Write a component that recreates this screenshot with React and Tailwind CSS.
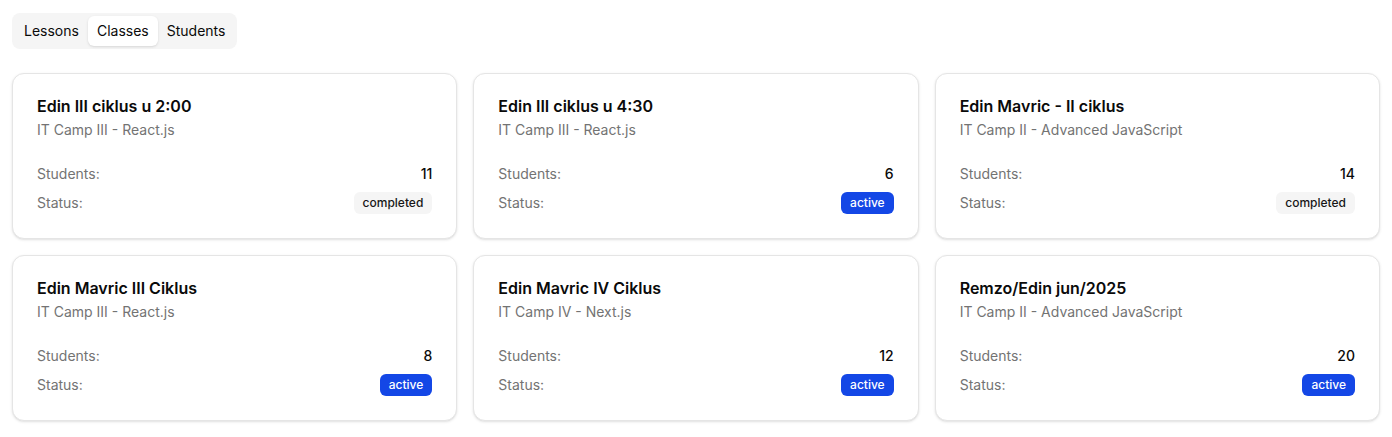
import { useState } from 'react';

const TABS = ['Lessons', 'Classes', 'Students'];

const CLASSES = [
  { id: 1, name: 'Edin III ciklus u 2:00', course: 'IT Camp III - React.js', students: 11, status: 'completed' },
  { id: 2, name: 'Edin III ciklus u 4:30', course: 'IT Camp III - React.js', students: 6, status: 'active' },
  { id: 3, name: 'Edin Mavric - II ciklus', course: 'IT Camp II - Advanced JavaScript', students: 14, status: 'completed' },
  { id: 4, name: 'Edin Mavric III Ciklus', course: 'IT Camp III - React.js', students: 8, status: 'active' },
  { id: 5, name: 'Edin Mavric IV Ciklus', course: 'IT Camp IV - Next.js', students: 12, status: 'active' },
  { id: 6, name: 'Remzo/Edin jun/2025', course: 'IT Camp II - Advanced JavaScript', students: 20, status: 'active' },
];

function StatusBadge({ status }) {
  const styles =
    status === 'active'
      ? 'bg-blue-700 text-white'
      : 'bg-neutral-100 text-neutral-900';
  return (
    <span
      className={`inline-flex items-center rounded-md border border-transparent px-2 py-0.5 text-xs font-medium ${styles}`}
    >
      {status}
    </span>
  );
}

function ClassCard({ item }) {
  return (
    <div className="flex flex-col gap-6 rounded-xl border border-neutral-200 bg-white py-6 shadow-sm">
      <div className="grid gap-1.5 px-6">
        <h3 className="text-base font-semibold leading-none text-neutral-950">{item.name}</h3>
        <p className="text-sm text-neutral-500">{item.course}</p>
      </div>
      <div className="space-y-2 px-6 text-sm">
        <div className="flex items-center justify-between">
          <span className="text-neutral-500">Students:</span>
          <span className="font-medium text-neutral-950">{item.students}</span>
        </div>
        <div className="flex items-center justify-between">
          <span className="text-neutral-500">Status:</span>
          <StatusBadge status={item.status} />
        </div>
      </div>
    </div>
  );
}

export default function App() {
  const [tab, setTab] = useState('Classes');

  return (
    <div
      className="min-h-screen bg-white px-3 pb-3 pt-[13px] text-neutral-950"
      style={{ fontFamily: 'Inter, "Noto Sans", sans-serif' }}
    >
      <div className="inline-flex h-9 items-center rounded-lg bg-neutral-100 p-[3px]">
        {TABS.map((t) => (
          <button
            key={t}
            onClick={() => setTab(t)}
            className={`h-full rounded-md border border-transparent px-2 py-1 text-sm font-normal ${
              tab === t ? 'bg-white shadow-sm' : 'text-neutral-950'
            }`}
          >
            {t}
          </button>
        ))}
      </div>

      <div className="mt-6 grid grid-cols-3 gap-4">
        {CLASSES.map((c) => (
          <ClassCard key={c.id} item={c} />
        ))}
      </div>
    </div>
  );
}
